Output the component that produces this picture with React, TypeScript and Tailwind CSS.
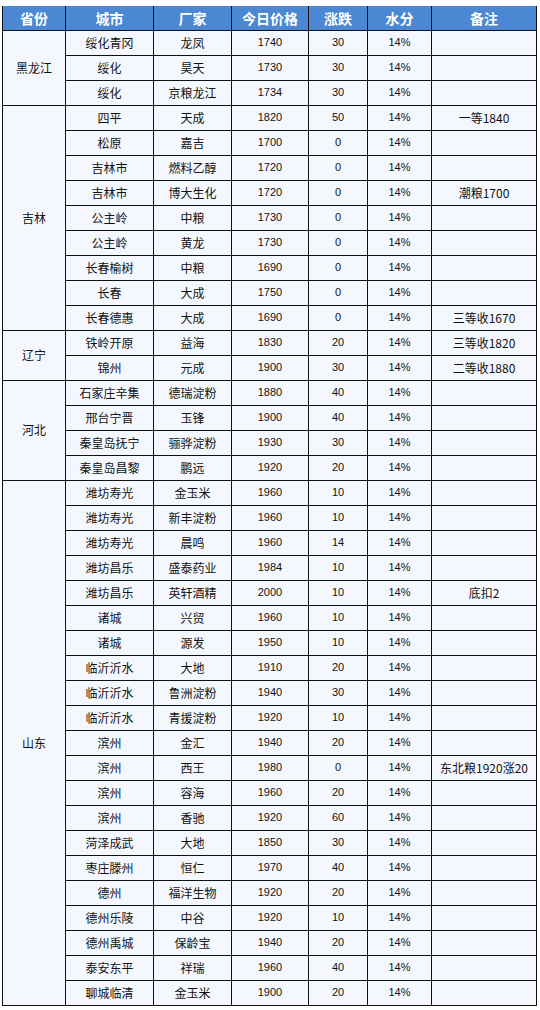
import React from "react";

type Row = [string, string, string, string, string, string];

const groups: { prov: string; rows: Row[] }[] = [
  {
    prov: "黑龙江",
    rows: [
      ["绥化青冈", "龙凤", "1740", "30", "14%", ""],
      ["绥化", "昊天", "1730", "30", "14%", ""],
      ["绥化", "京粮龙江", "1734", "30", "14%", ""],
    ],
  },
  {
    prov: "吉林",
    rows: [
      ["四平", "天成", "1820", "50", "14%", "一等1840"],
      ["松原", "嘉吉", "1700", "0", "14%", ""],
      ["吉林市", "燃料乙醇", "1720", "0", "14%", ""],
      ["吉林市", "博大生化", "1720", "0", "14%", "潮粮1700"],
      ["公主岭", "中粮", "1730", "0", "14%", ""],
      ["公主岭", "黄龙", "1730", "0", "14%", ""],
      ["长春榆树", "中粮", "1690", "0", "14%", ""],
      ["长春", "大成", "1750", "0", "14%", ""],
      ["长春德惠", "大成", "1690", "0", "14%", "三等收1670"],
    ],
  },
  {
    prov: "辽宁",
    rows: [
      ["铁岭开原", "益海", "1830", "20", "14%", "三等收1820"],
      ["锦州", "元成", "1900", "30", "14%", "二等收1880"],
    ],
  },
  {
    prov: "河北",
    rows: [
      ["石家庄辛集", "德瑞淀粉", "1880", "40", "14%", ""],
      ["邢台宁晋", "玉锋", "1900", "40", "14%", ""],
      ["秦皇岛抚宁", "骊骅淀粉", "1930", "30", "14%", ""],
      ["秦皇岛昌黎", "鹏远", "1920", "20", "14%", ""],
    ],
  },
  {
    prov: "山东",
    rows: [
      ["潍坊寿光", "金玉米", "1960", "10", "14%", ""],
      ["潍坊寿光", "新丰淀粉", "1960", "10", "14%", ""],
      ["潍坊寿光", "晨鸣", "1960", "14", "14%", ""],
      ["潍坊昌乐", "盛泰药业", "1984", "10", "14%", ""],
      ["潍坊昌乐", "英轩酒精", "2000", "10", "14%", "底扣2"],
      ["诸城", "兴贸", "1960", "10", "14%", ""],
      ["诸城", "源发", "1950", "10", "14%", ""],
      ["临沂沂水", "大地", "1910", "20", "14%", ""],
      ["临沂沂水", "鲁洲淀粉", "1940", "30", "14%", ""],
      ["临沂沂水", "青援淀粉", "1920", "10", "14%", ""],
      ["滨州", "金汇", "1940", "20", "14%", ""],
      ["滨州", "西王", "1980", "0", "14%", "东北粮1920涨20"],
      ["滨州", "容海", "1960", "20", "14%", ""],
      ["滨州", "香驰", "1920", "60", "14%", ""],
      ["菏泽成武", "大地", "1850", "30", "14%", ""],
      ["枣庄滕州", "恒仁", "1970", "40", "14%", ""],
      ["德州", "福洋生物", "1920", "20", "14%", ""],
      ["德州乐陵", "中谷", "1920", "10", "14%", ""],
      ["德州禹城", "保龄宝", "1940", "20", "14%", ""],
      ["泰安东平", "祥瑞", "1960", "40", "14%", ""],
      ["聊城临清", "金玉米", "1900", "20", "14%", ""],
    ],
  },
];

const cjk = "font-['Noto_Sans_CJK_SC',sans-serif] text-[12px] text-[#111]";
const num = "font-['Liberation_Sans','Noto_Sans_CJK_SC',sans-serif] text-[11px] text-[#111]";
const td = "border border-[#111] text-center align-middle p-0 leading-none";

export default function App() {
  const headers = ["省份", "城市", "厂家", "今日价格", "涨跌", "水分", "备注"];
  return (
    <div className="w-[540px] h-[1010px] bg-white pt-[6px] pl-[2px]">
      <table className="table-fixed border-collapse w-[534px] bg-[#f4f8fe]">
        <colgroup>
          <col className="w-[63px]" />
          <col className="w-[88px]" />
          <col className="w-[78px]" />
          <col className="w-[77px]" />
          <col className="w-[59px]" />
          <col className="w-[64px]" />
          <col className="w-[105px]" />
        </colgroup>
        <thead>
          <tr className="h-[24px] bg-[#4b87d2]">
            {headers.map((h) => (
              <th
                key={h}
                className="border-x border-b border-[#111] text-white font-bold text-[14px] font-['Noto_Sans_CJK_SC',sans-serif] text-center align-middle p-0 leading-none"
              >
                {h}
              </th>
            ))}
          </tr>
        </thead>
        <tbody>
          {groups.map((g) =>
            g.rows.map((r, i) => (
              <tr key={g.prov + i} className="h-[25px]">
                {i === 0 && (
                  <td rowSpan={g.rows.length} className={`${td} ${cjk}`}>
                    {g.prov}
                  </td>
                )}
                <td className={`${td} ${cjk}`}>{r[0]}</td>
                <td className={`${td} ${cjk}`}>{r[1]}</td>
                <td className={`${td} ${num}`}>{r[2]}</td>
                <td className={`${td} ${num}`}>{r[3]}</td>
                <td className={`${td} ${num}`}>{r[4]}</td>
                <td className={`${td} ${cjk}`}>{r[5]}</td>
              </tr>
            ))
          )}
        </tbody>
      </table>
    </div>
  );
}
